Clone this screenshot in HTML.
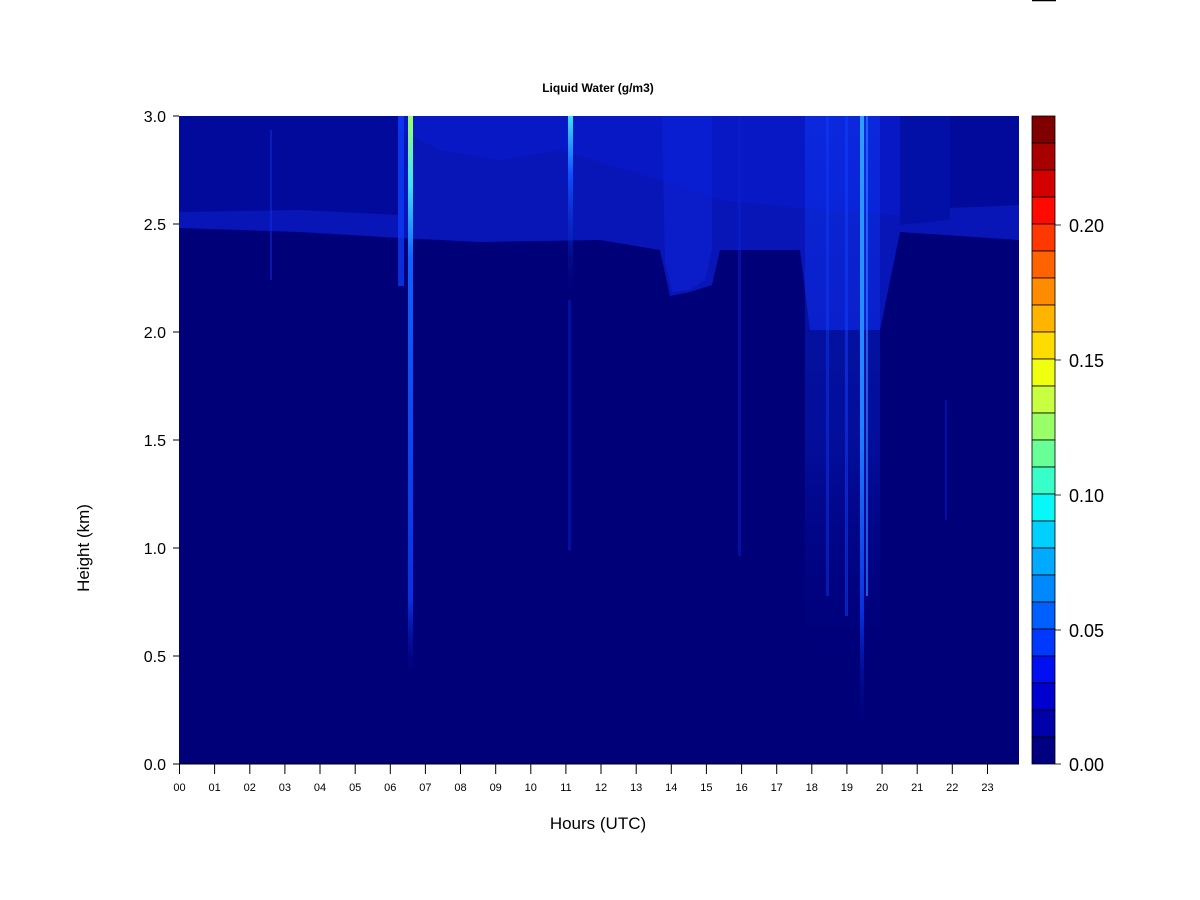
<!DOCTYPE html>
<html><head><meta charset="utf-8"><style>
html,body{margin:0;padding:0;background:#fff;}
svg{display:block;font-family:"Liberation Sans",Arial,sans-serif;}
</style></head><body>
<svg width="1200" height="900" viewBox="0 0 1200 900" xmlns="http://www.w3.org/2000/svg">
<defs>
<linearGradient id="vfade" x1="0" y1="0" x2="0" y2="1">
<stop offset="0" stop-color="#1040ff" stop-opacity="0.9"/>
<stop offset="0.6" stop-color="#0a30f0" stop-opacity="0.6"/>
<stop offset="1" stop-color="#0000a0" stop-opacity="0"/>
</linearGradient>
<linearGradient id="s1" x1="0" y1="0" x2="0" y2="1">
<stop offset="0" stop-color="#a0ff60"/>
<stop offset="0.12" stop-color="#40e0ff"/>
<stop offset="0.25" stop-color="#1060ff"/>
<stop offset="0.85" stop-color="#0a30e0"/>
<stop offset="1" stop-color="#000080" stop-opacity="0"/>
</linearGradient>
<linearGradient id="s2" x1="0" y1="0" x2="0" y2="1">
<stop offset="0" stop-color="#40e0ff"/>
<stop offset="0.3" stop-color="#1050ff"/>
<stop offset="1" stop-color="#000080" stop-opacity="0"/>
</linearGradient>
<linearGradient id="s3" x1="0" y1="0" x2="0" y2="1">
<stop offset="0" stop-color="#30a0ff"/>
<stop offset="0.5" stop-color="#2080ff"/>
<stop offset="0.8" stop-color="#0830e0"/>
<stop offset="1" stop-color="#000080" stop-opacity="0"/>
</linearGradient>
</defs>
<line x1="1032" y1="0.5" x2="1056" y2="0.5" stroke="#000" stroke-width="1.5"/>
<text x="598" y="92" font-size="12" font-weight="bold" text-anchor="middle">Liquid Water (g/m3)</text>
<rect x="179" y="116" width="840" height="648" fill="#000078"/>
<path d="M179,116 H1019 V240 L960,236 L900,232 L880,330 L810,330 L800,250 L720,250 L712,285 L690,292 L670,296 L660,250 L600,240 L480,242 L400,238 L300,232 L179,228 Z" fill="#0816b8"/>
<path d="M179,116 H1019 V200 L960,205 L900,215 L820,210 L720,200 L660,180 L560,150 L500,160 L440,150 L400,130 Z" fill="#0a1cd0" opacity="0.55"/>
<path d="M179,116 H398 V215 L300,210 L179,212 Z" fill="#020a9c"/>
<path d="M950,116 H1019 V205 L950,208 Z" fill="#020a9c"/>
<path d="M900,116 H950 V220 L900,225 Z" fill="#0310a8"/>
<rect x="805" y="116" width="75" height="560" fill="url(#vfade)" opacity="0.45"/>
<path d="M662,116 H712 V250 L705,280 L690,290 L672,292 L665,260 Z" fill="#1030f0" opacity="0.3"/>
<rect x="398" y="116" width="6" height="170" fill="#1040ff" opacity="0.7"/>
<rect x="408" y="116" width="5" height="570" fill="url(#s1)"/>
<rect x="568" y="116" width="5" height="190" fill="url(#s2)"/>
<rect x="568" y="300" width="3" height="250" fill="#0820d0" opacity="0.5"/>
<rect x="860" y="116" width="4" height="620" fill="url(#s3)"/>
<rect x="866" y="116" width="2" height="480" fill="#2070ff" opacity="0.8"/>
<rect x="845" y="116" width="3" height="500" fill="#1040ff" opacity="0.5"/>
<rect x="826" y="116" width="3" height="480" fill="#1040ff" opacity="0.4"/>
<rect x="738" y="116" width="3" height="440" fill="#0820d0" opacity="0.5"/>
<rect x="270" y="130" width="2" height="150" fill="#1030e0" opacity="0.5"/>
<rect x="945" y="400" width="2" height="120" fill="#0820d0" opacity="0.5"/>
<g stroke="#000" stroke-width="1">
<line x1="173" y1="116" x2="179" y2="116"/><line x1="173" y1="224" x2="179" y2="224"/>
<line x1="173" y1="332" x2="179" y2="332"/><line x1="173" y1="440" x2="179" y2="440"/>
<line x1="173" y1="548" x2="179" y2="548"/><line x1="173" y1="656" x2="179" y2="656"/>
<line x1="173" y1="764" x2="179" y2="764"/>
<line x1="179" y1="764" x2="1019" y2="764"/>
</g>
<g font-size="16" text-anchor="end">
<text x="166" y="122">3.0</text><text x="166" y="230">2.5</text><text x="166" y="338">2.0</text>
<text x="166" y="446">1.5</text><text x="166" y="554">1.0</text><text x="166" y="662">0.5</text>
<text x="166" y="770">0.0</text>
</g>
<text transform="translate(89,548) rotate(-90)" font-size="17" text-anchor="middle">Height (km)</text>
<g stroke="#000" stroke-width="1">
<line x1="179.5" y1="764" x2="179.5" y2="774"/><line x1="214.6" y1="764" x2="214.6" y2="774"/>
<line x1="249.8" y1="764" x2="249.8" y2="774"/><line x1="284.9" y1="764" x2="284.9" y2="774"/>
<line x1="320" y1="764" x2="320" y2="774"/><line x1="355.2" y1="764" x2="355.2" y2="774"/>
<line x1="390.3" y1="764" x2="390.3" y2="774"/><line x1="425.4" y1="764" x2="425.4" y2="774"/>
<line x1="460.5" y1="764" x2="460.5" y2="774"/><line x1="495.7" y1="764" x2="495.7" y2="774"/>
<line x1="530.8" y1="764" x2="530.8" y2="774"/><line x1="565.9" y1="764" x2="565.9" y2="774"/>
<line x1="601" y1="764" x2="601" y2="774"/><line x1="636.2" y1="764" x2="636.2" y2="774"/>
<line x1="671.3" y1="764" x2="671.3" y2="774"/><line x1="706.4" y1="764" x2="706.4" y2="774"/>
<line x1="741.6" y1="764" x2="741.6" y2="774"/><line x1="776.7" y1="764" x2="776.7" y2="774"/>
<line x1="811.8" y1="764" x2="811.8" y2="774"/><line x1="846.9" y1="764" x2="846.9" y2="774"/>
<line x1="882.1" y1="764" x2="882.1" y2="774"/><line x1="917.2" y1="764" x2="917.2" y2="774"/>
<line x1="952.3" y1="764" x2="952.3" y2="774"/><line x1="987.5" y1="764" x2="987.5" y2="774"/>
</g>
<g font-size="11" text-anchor="middle">
<text x="179.5" y="791">00</text><text x="214.6" y="791">01</text><text x="249.8" y="791">02</text>
<text x="284.9" y="791">03</text><text x="320" y="791">04</text><text x="355.2" y="791">05</text>
<text x="390.3" y="791">06</text><text x="425.4" y="791">07</text><text x="460.5" y="791">08</text>
<text x="495.7" y="791">09</text><text x="530.8" y="791">10</text><text x="565.9" y="791">11</text>
<text x="601" y="791">12</text><text x="636.2" y="791">13</text><text x="671.3" y="791">14</text>
<text x="706.4" y="791">15</text><text x="741.6" y="791">16</text><text x="776.7" y="791">17</text>
<text x="811.8" y="791">18</text><text x="846.9" y="791">19</text><text x="882.1" y="791">20</text>
<text x="917.2" y="791">21</text><text x="952.3" y="791">22</text><text x="987.5" y="791">23</text>
</g>
<text x="598" y="829" font-size="17" text-anchor="middle">Hours (UTC)</text>
<g stroke="#000" stroke-width="0.8">
<rect x="1032" y="116" width="23" height="27" fill="#800000"/>
<rect x="1032" y="143" width="23" height="27" fill="#a80000"/>
<rect x="1032" y="170" width="23" height="27" fill="#d40000"/>
<rect x="1032" y="197" width="23" height="27" fill="#ff0a00"/>
<rect x="1032" y="224" width="23" height="27" fill="#ff3800"/>
<rect x="1032" y="251" width="23" height="27" fill="#ff6200"/>
<rect x="1032" y="278" width="23" height="27" fill="#ff8c00"/>
<rect x="1032" y="305" width="23" height="27" fill="#ffb400"/>
<rect x="1032" y="332" width="23" height="27" fill="#ffdc00"/>
<rect x="1032" y="359" width="23" height="27" fill="#f0ff10"/>
<rect x="1032" y="386" width="23" height="27" fill="#c8ff40"/>
<rect x="1032" y="413" width="23" height="27" fill="#98ff68"/>
<rect x="1032" y="440" width="23" height="27" fill="#68ff98"/>
<rect x="1032" y="467" width="23" height="27" fill="#38ffc8"/>
<rect x="1032" y="494" width="23" height="27" fill="#08f8f8"/>
<rect x="1032" y="521" width="23" height="27" fill="#00d0ff"/>
<rect x="1032" y="548" width="23" height="27" fill="#00aaff"/>
<rect x="1032" y="575" width="23" height="27" fill="#0088ff"/>
<rect x="1032" y="602" width="23" height="27" fill="#0060ff"/>
<rect x="1032" y="629" width="23" height="27" fill="#0038ff"/>
<rect x="1032" y="656" width="23" height="27" fill="#0010f0"/>
<rect x="1032" y="683" width="23" height="27" fill="#0000d0"/>
<rect x="1032" y="710" width="23" height="27" fill="#0000a8"/>
<rect x="1032" y="737" width="23" height="27" fill="#000080"/>
<line x1="1055" y1="225" x2="1061" y2="225"/><line x1="1055" y1="360" x2="1061" y2="360"/>
<line x1="1055" y1="495" x2="1061" y2="495"/><line x1="1055" y1="630" x2="1061" y2="630"/>
<line x1="1055" y1="764" x2="1061" y2="764"/>
</g>
<g font-size="18">
<text x="1069" y="232">0.20</text><text x="1069" y="367">0.15</text><text x="1069" y="502">0.10</text>
<text x="1069" y="637">0.05</text><text x="1069" y="771">0.00</text>
</g>
</svg>
</body></html>
